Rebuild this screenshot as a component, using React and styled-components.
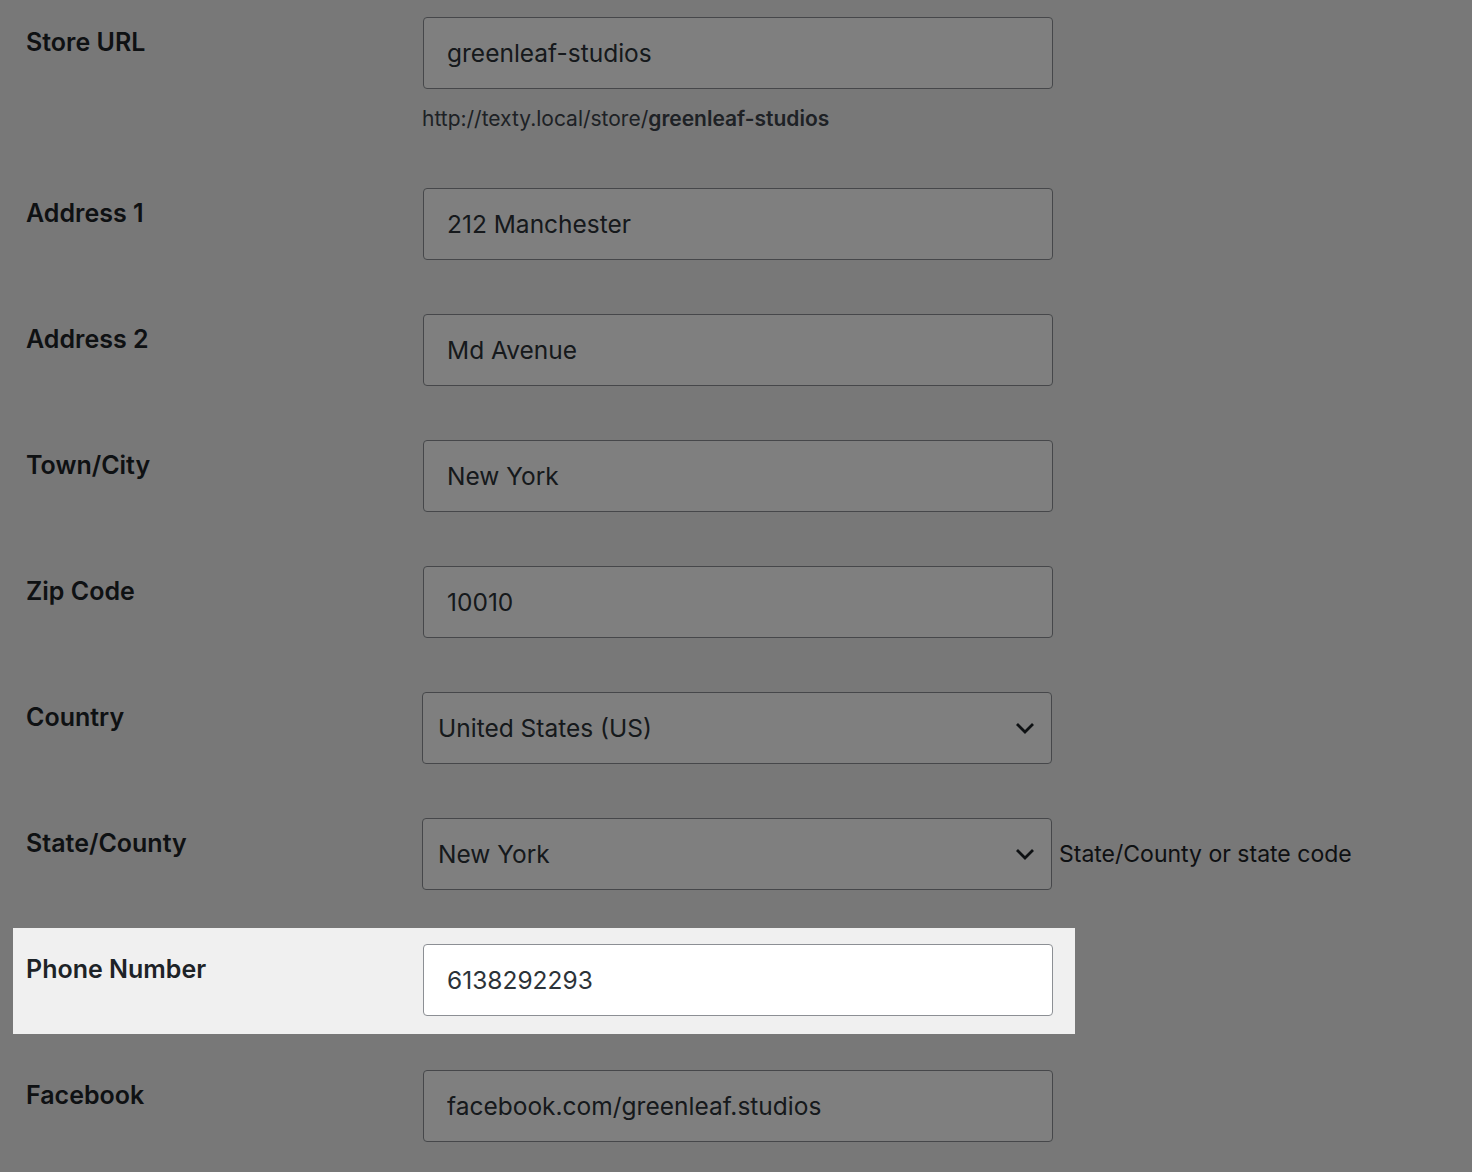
import React from 'react'
import styled, { createGlobalStyle } from 'styled-components'

const GlobalStyle = createGlobalStyle`
  html, body {
    margin: 0;
    padding: 0;
    background: #f0f0f0;
    font-family: Inter, "Noto Sans", "Liberation Sans", sans-serif;
    color: #1d2327;
    overflow: hidden;
  }
`

const Page = styled.div`
  padding: 1px 0 0 13px;
  min-height: 1172px;
  box-sizing: border-box;
`

const Form = styled.div`
  display: flex;
  flex-direction: column;
  gap: 20px;
  width: 1062px;
`

// the spotlighted row casts the dim overlay over everything else
const Row = styled.div`
  display: grid;
  grid-template-columns: 397px 630px;
  padding: 16px 22px 18px 13px;
  position: relative;
  background: #f0f0f0;
  ${p => p.$focus && `
    z-index: 2;
    box-shadow: 0 0 0 3000px rgba(0, 0, 0, 0.5);
  `}
`

const Label = styled.label`
  padding-top: 11px;
  font-size: 25px;
  line-height: 28px;
  font-weight: 600;
  color: #1d2327;
`

const Field = styled.div`
  display: flex;
  flex-direction: column;
  position: relative;
`

const Input = styled.input`
  box-sizing: border-box;
  width: 630px;
  height: 72px;
  margin: 0;
  padding: 0 23px;
  border: 1px solid #8c8f94;
  border-radius: 4px;
  background: #fff;
  font-family: inherit;
  font-size: 24.5px;
  color: #2c3338;
  outline: none;
`

const SelectBox = styled.div`
  box-sizing: border-box;
  width: 630px;
  height: 72px;
  margin-left: -1px;
  padding: 0 16px 0 15px;
  border: 1px solid #8c8f94;
  border-radius: 4px;
  background: #fff;
  display: flex;
  align-items: center;
  justify-content: space-between;
  font-size: 24.5px;
  color: #2c3338;
`

const Hint = styled.span`
  position: absolute;
  left: 636px;
  top: 0;
  height: 72px;
  display: flex;
  align-items: center;
  white-space: nowrap;
  font-size: 23px;
  color: #1d2327;
`

const Description = styled.p`
  margin: 14px 0 0 -1px;
  font-size: 21px;
  line-height: 31px;
  color: #3c434a;

  b {
    font-weight: 600;
  }
`

const Chevron = () => (
  <svg width="20" height="12" viewBox="0 0 20 12" fill="none">
    <path d="M2 2l8 8 8-8" stroke="#1d2327" strokeWidth="2.8" />
  </svg>
)

const Select = ({ value, hint }) => (
  <Field>
    <SelectBox>
      <span>{value}</span>
      <Chevron />
    </SelectBox>
    {hint && <Hint>{hint}</Hint>}
  </Field>
)

const TextField = ({ value }) => (
  <Field>
    <Input defaultValue={value} />
  </Field>
)

const App = () => (
  <>
    <GlobalStyle />
    <Page>
      <Form>
        <Row>
          <Label>Store URL</Label>
          <Field>
            <Input defaultValue="greenleaf-studios" />
            <Description>
              http://texty.local/store/<b>greenleaf-studios</b>
            </Description>
          </Field>
        </Row>
        <Row>
          <Label>Address 1</Label>
          <TextField value="212 Manchester" />
        </Row>
        <Row>
          <Label>Address 2</Label>
          <TextField value="Md Avenue" />
        </Row>
        <Row>
          <Label>Town/City</Label>
          <TextField value="New York" />
        </Row>
        <Row>
          <Label>Zip Code</Label>
          <TextField value="10010" />
        </Row>
        <Row>
          <Label>Country</Label>
          <Select value="United States (US)" />
        </Row>
        <Row>
          <Label>State/County</Label>
          <Select value="New York" hint="State/County or state code" />
        </Row>
        <Row $focus>
          <Label>Phone Number</Label>
          <TextField value="6138292293" />
        </Row>
        <Row>
          <Label>Facebook</Label>
          <TextField value="facebook.com/greenleaf.studios" />
        </Row>
      </Form>
    </Page>
  </>
)

export default App
